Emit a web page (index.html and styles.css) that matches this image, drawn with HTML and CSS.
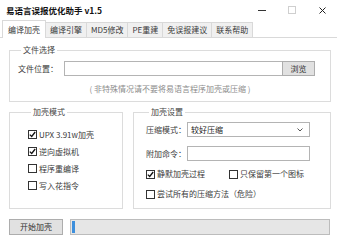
FILE: index.html
```html
<!DOCTYPE html>
<html lang="zh-CN">
<head>
  <meta charset="UTF-8" />
  <title>易语言误报优化助手 v1.5</title>
  <link rel="stylesheet" href="styles.css">
</head>
<body>

  <div class="window">
    <div class="titlebar">
      <span class="title">易语言误报优化助手 v1.5</span>
      <div class="controls">
        <span class="ctl min"></span>
        <span class="ctl max"></span>
        <span class="ctl close">
          <svg width="7" height="7" viewBox="0 0 7 7"><path d="M0.5 0.5 L6.5 6.5 M6.5 0.5 L0.5 6.5" stroke="#222" stroke-width="1"/></svg>
        </span>
      </div>
    </div>

    <div class="tabs">
      <span class="tab active">编译加壳</span>
      <span class="tab">编译引擎</span>
      <span class="tab">MD5修改</span>
      <span class="tab">PE重建</span>
      <span class="tab">免误报建议</span>
      <span class="tab">联系帮助</span>
    </div>

    <div class="page">
      <fieldset class="group file-group">
        <legend>文件选择</legend>
        <div class="file-row">
          <span class="label">文件位置：</span>
          <span class="input"></span>
          <span class="button browse">浏览</span>
        </div>
        <p class="hint">( 非特殊情况请不要将易语言程序加壳或压缩 )</p>
      </fieldset>

      <div class="groups">
        <fieldset class="group mode-group">
          <legend>加壳模式</legend>
          <div class="check"><span class="box on"><svg width="7" height="7" viewBox="0 0 7 7"><path d="M0.8 3.6 L2.7 5.5 L6.2 1" fill="none" stroke="#111" stroke-width="1.3"/></svg></span>UPX 3.91w加壳</div>
          <div class="check"><span class="box on"><svg width="7" height="7" viewBox="0 0 7 7"><path d="M0.8 3.6 L2.7 5.5 L6.2 1" fill="none" stroke="#111" stroke-width="1.3"/></svg></span>逆向虚拟机</div>
          <div class="check"><span class="box"></span>程序重编译</div>
          <div class="check"><span class="box"></span>写入花指令</div>
        </fieldset>

        <fieldset class="group set-group">
          <legend>加壳设置</legend>
          <div class="field">
            <span class="label">压缩模式：</span>
            <span class="select">较好压缩
              <svg width="6" height="4" viewBox="0 0 6 4"><path d="M0.5 0.5 L3 3 L5.5 0.5" fill="none" stroke="#555" stroke-width="1"/></svg>
            </span>
          </div>
          <div class="field">
            <span class="label">附加命令：</span>
            <span class="input"></span>
          </div>
          <div class="check-row">
            <div class="check wide"><span class="box on"><svg width="7" height="7" viewBox="0 0 7 7"><path d="M0.8 3.6 L2.7 5.5 L6.2 1" fill="none" stroke="#111" stroke-width="1.3"/></svg></span>静默加壳过程</div>
            <div class="check"><span class="box"></span>只保留第一个图标</div>
          </div>
          <div class="check-row">
            <div class="check"><span class="box"></span>尝试所有的压缩方法（危险）</div>
          </div>
        </fieldset>
      </div>

      <div class="bottom">
        <span class="button start">开始加壳</span>
        <div class="progress"><span class="fill"></span></div>
      </div>
    </div>
  </div>

</body>
</html>
```

FILE: styles.css
```css
* {
  box-sizing: border-box;
}

body {
  margin: 0;
  font-family: "Noto Sans CJK SC", "Noto Sans", sans-serif;
  font-size: 8px;
  line-height: 12px;
  color: #3a3a3a;
  background: #fff;
}

.window {
  width: 337px;
  height: 240px;
  background: #fff;
}

/* title bar */

.titlebar {
  display: flex;
  align-items: center;
  height: 20px;
  padding-left: 6px;
}

.title {
  font-size: 8.5px;
  font-weight: bold;
  color: #111;
}

.controls {
  display: flex;
  margin-left: auto;
}

.ctl {
  display: flex;
  align-items: center;
  justify-content: center;
  width: 30px;
  height: 20px;
}

.ctl.min::before {
  content: "";
  width: 8px;
  height: 1px;
  background: #333;
}

.ctl.max::before {
  content: "";
  width: 6px;
  height: 6px;
  border: 1px solid #cfcfcf;
}

/* tabs */

.tabs {
  display: flex;
  align-items: flex-end;
  height: 18px;
  padding-left: 2px;
  border-bottom: 1px solid #d9d9d9;
}

.tab {
  height: 15px;
  padding: 0 4px;
  line-height: 14px;
  background: #f0f0f0;
  border: 1px solid #d9d9d9;
  border-bottom: none;
  margin-left: -1px;
  color: #3a3a3a;
}

.tab:first-child {
  margin-left: 0;
}

.tab.active {
  height: 18px;
  margin-bottom: -1px;
  padding: 0 5px;
  line-height: 17px;
  background: #fff;
  position: relative;
}

/* page */

.page {
  padding: 6px 6px 0 9px;
}

.group {
  margin: 0;
  padding: 0;
  min-width: 0;
  border: 1px solid #dcdcdc;
}

.group legend {
  margin-left: 3px;
  padding: 0 2px;
  line-height: 12px;
  color: #444;
}

.file-group {
  padding: 5px 15px 6px 8px;
}

.file-row {
  display: flex;
  align-items: center;
  height: 15px;
}

.label {
  width: 46px;
  flex: none;
}

.input {
  flex: 1;
  height: 15px;
  background: #fff;
  border: 1px solid #b4b4b4;
}

.button {
  display: flex;
  align-items: center;
  justify-content: center;
  height: 16px;
  background: #e1e1e1;
  border: 1px solid #adadad;
  color: #333;
}

.browse {
  width: 33px;
  height: 15px;
  margin-left: -1px;
}

.hint {
  margin: 7px -15px 0 -8px;
  text-align: center;
  color: #8c8c8c;
}

.groups {
  display: flex;
  gap: 10px;
  margin-top: 4px;
}

.mode-group {
  width: 114px;
  flex: none;
  padding: 8px 0 0 18px;
}

.check {
  display: flex;
  align-items: center;
  height: 17px;
  white-space: nowrap;
}

.box {
  display: flex;
  align-items: center;
  justify-content: center;
  width: 9px;
  height: 9px;
  margin-right: 2px;
  background: #fff;
  border: 1px solid #333;
}

.set-group {
  flex: 1;
  padding: 4px 20px 6px 12px;
}

.set-group .label {
  width: 41px;
}

.field {
  display: flex;
  align-items: center;
  height: 15px;
}

.field + .field {
  margin-top: 9px;
}

.select {
  flex: 1;
  display: flex;
  align-items: center;
  justify-content: space-between;
  height: 15px;
  padding: 0 6px 0 3px;
  background: #fff;
  border: 1px solid #b4b4b4;
  color: #222;
}

.check-row {
  display: flex;
  margin-top: 4px;
}

.check-row .check {
  height: 16px;
}

.field + .check-row {
  margin-top: 5px;
}

.check.wide {
  width: 83px;
}

/* bottom */

.bottom {
  display: flex;
  margin-top: 10px;
}

.start {
  width: 54px;
}

.progress {
  flex: 1;
  height: 16px;
  margin: 0 1px 0 7px;
  padding: 1px;
  background: #e6e6e6;
  border: 1px solid #bcbcbc;
}

.fill {
  display: block;
  width: 3px;
  height: 100%;
  background: #3d8fdc;
}
```
